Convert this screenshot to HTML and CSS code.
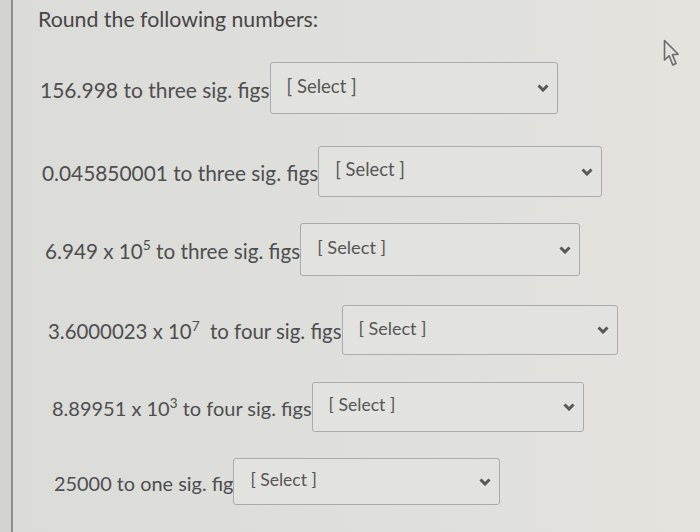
FILE: index.html
```html
<!DOCTYPE html>
<html>
<head>
<meta charset="utf-8">
<link rel="stylesheet" href="styles.css">
</head>
<body>
<div class="page">
  <div class="panel">
    <h1 class="title">Round the following numbers:</h1>
    <div class="rows">
      <div class="row r1">
        <span class="label">156.998 to three sig. figs</span>
        <div class="select"><span>[ Select ]</span><svg class="chev" viewBox="0 0 12 8"><path d="M1.5 1.5 L6 6 L10.5 1.5" /></svg></div>
      </div>
      <div class="row r2">
        <span class="label">0.045850001 to three sig. figs</span>
        <div class="select"><span>[ Select ]</span><svg class="chev" viewBox="0 0 12 8"><path d="M1.5 1.5 L6 6 L10.5 1.5" /></svg></div>
      </div>
      <div class="row r3">
        <span class="label">6.949 x 10<sup>5</sup> to three sig. figs</span>
        <div class="select"><span>[ Select ]</span><svg class="chev" viewBox="0 0 12 8"><path d="M1.5 1.5 L6 6 L10.5 1.5" /></svg></div>
      </div>
      <div class="row r4">
        <span class="label">3.6000023 x 10<sup>7</sup>&nbsp; to four sig. figs</span>
        <div class="select"><span>[ Select ]</span><svg class="chev" viewBox="0 0 12 8"><path d="M1.5 1.5 L6 6 L10.5 1.5" /></svg></div>
      </div>
      <div class="row r5">
        <span class="label">8.89951 x 10<sup>3</sup> to four sig. figs</span>
        <div class="select"><span>[ Select ]</span><svg class="chev" viewBox="0 0 12 8"><path d="M1.5 1.5 L6 6 L10.5 1.5" /></svg></div>
      </div>
      <div class="row r6">
        <span class="label">25000 to one sig. fig</span>
        <div class="select"><span>[ Select ]</span><svg class="chev" viewBox="0 0 12 8"><path d="M1.5 1.5 L6 6 L10.5 1.5" /></svg></div>
      </div>
    </div>
  </div>
  <svg class="cursor" viewBox="0 0 17 29" width="17" height="29"><path d="M1.5 1.5 L1.5 21 L6.2 16.8 L9.8 26 L13 24.5 L9.4 15.6 L15.2 15.2 Z" fill="none" stroke="#6a6a6a" stroke-width="1.6" stroke-linejoin="round"/></svg>
</div>
</body>
</html>
```

FILE: styles.css
```css
html, body {
  margin: 0;
  padding: 0;
  background: #d9d9d5;
}
.page {
  position: relative;
  width: 700px;
  height: 532px;
  overflow: hidden;
  background: linear-gradient(90deg, #d2d2ce 0, #d2d2ce 11px, #dbdbd7 11px, #dfdfdb 60%, #e4e3de 100%);
  font-family: Lato, "Open Sans", sans-serif;
  color: #4e4e50;
}
.panel {
  margin-left: 11px;
  height: 532px;
  border-left: 2px solid #8f8f8f;
  padding-left: 25px;
  box-sizing: border-box;
}
.title {
  margin: 0;
  padding-top: 5px;
  font-size: 21.3px;
  font-weight: 400;
  line-height: 28px;
  color: #464648;
}
.rows {
  display: flex;
  flex-direction: column;
  margin-top: 29px;
}
.row {
  display: flex;
  align-items: center;
  font-size: 21px;
}
.label {
  white-space: nowrap;
  padding-top: 2px;
}
.label sup {
  font-size: 0.67em;
  line-height: 0;
  vertical-align: 0.62em;
}
.select {
  display: flex;
  align-items: center;
  justify-content: space-between;
  box-sizing: border-box;
  border: 1.5px solid #ababad;
  border-radius: 3px;
  background: #e2e2de;
  padding: 0 8px 0 16px;
  font-size: 0.88em;
  color: #565658;
}
.select span {
  margin-bottom: 5px;
}
.chev {
  width: 12px;
  height: 8px;
  fill: none;
  stroke: #58585a;
  stroke-width: 3;
}
.r1 { margin-left: 2px; }
.r1 .select { width: 288px; height: 52px; }
.r2 { margin-left: 4px; margin-top: 32px; font-size: 20.85px; }
.r2 .select { width: 284px; height: 51px; }
.r3 { margin-left: 7px; margin-top: 26px; font-size: 20.7px; }
.r3 .select { width: 280px; height: 53px; }
.r4 { margin-left: 10px; margin-top: 29px; font-size: 20.4px; }
.r4 .select { width: 276px; height: 50px; }
.r5 { margin-left: 14px; margin-top: 27px; font-size: 20px; }
.r5 .select { width: 272px; height: 50px; }
.r6 { margin-left: 16px; margin-top: 26px; font-size: 19.9px; }
.r6 .select { width: 267px; height: 47px; }
.cursor {
  position: absolute;
  left: 663px;
  top: 39px;
}
```
